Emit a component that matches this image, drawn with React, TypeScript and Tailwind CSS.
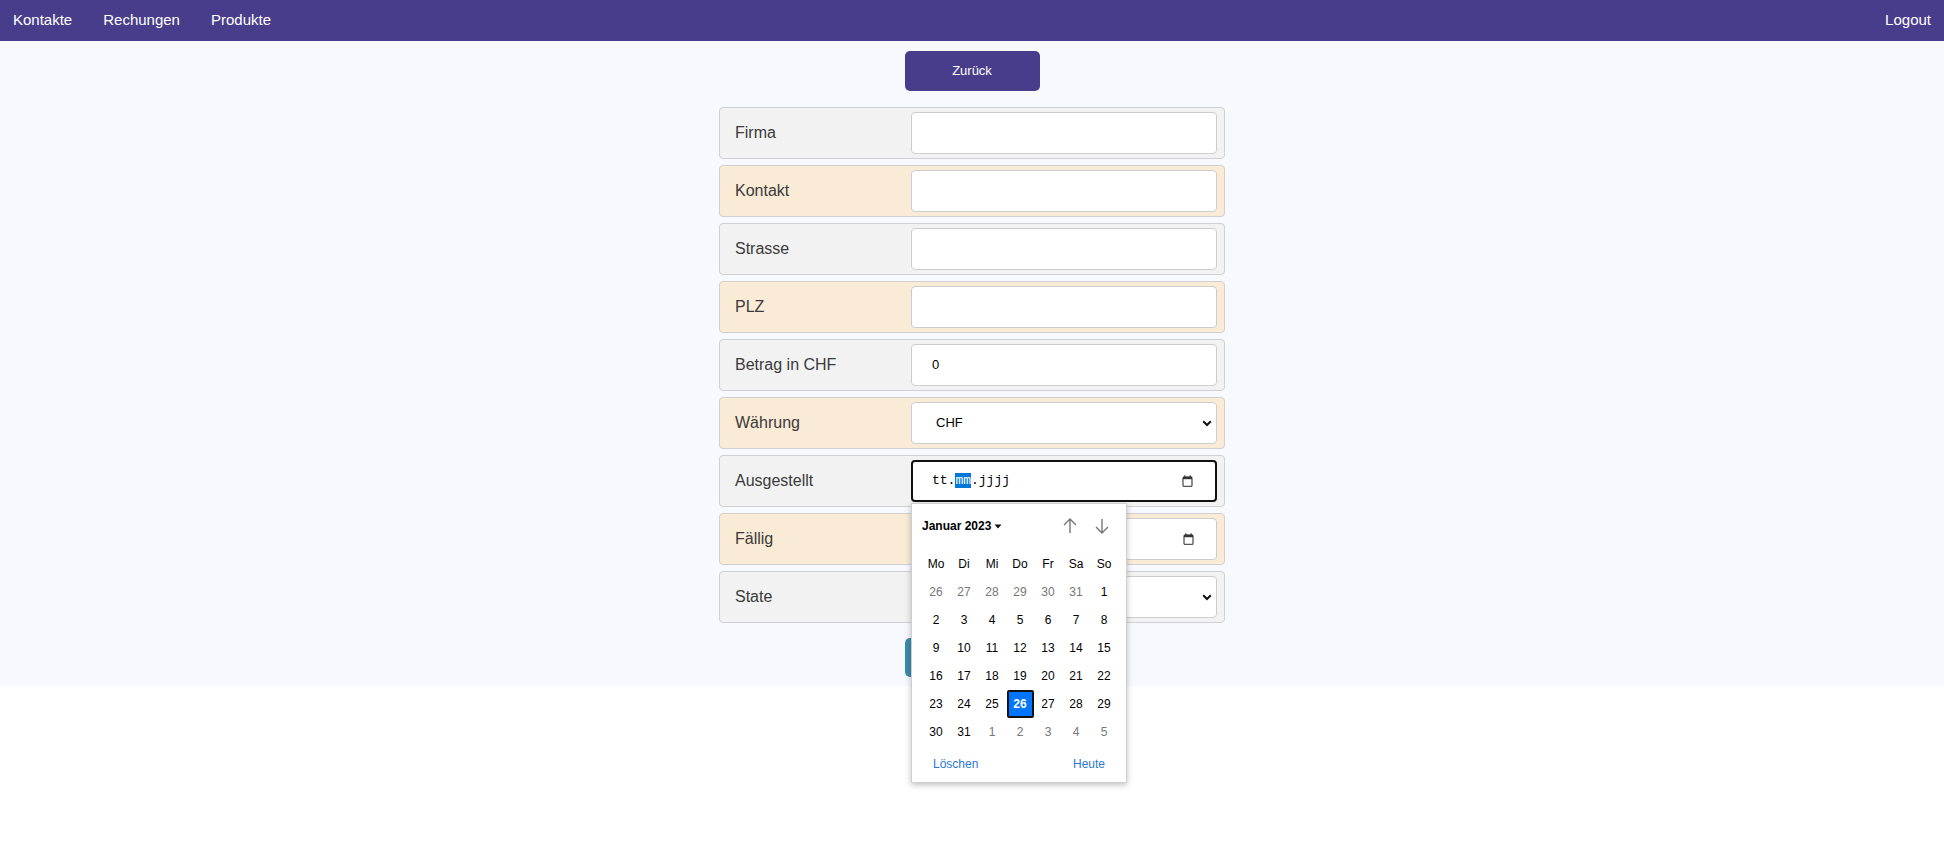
import React from "react";

const ROWS = [
  { label: "Firma", kind: "text", value: "" },
  { label: "Kontakt", kind: "text", value: "" },
  { label: "Strasse", kind: "text", value: "" },
  { label: "PLZ", kind: "text", value: "" },
  { label: "Betrag in CHF", kind: "text", value: "0" },
  { label: "Währung", kind: "select", value: "CHF" },
  { label: "Ausgestellt", kind: "date-focus", value: "" },
  { label: "Fällig", kind: "date", value: "" },
  { label: "State", kind: "select", value: "" },
];

function Chevron() {
  return (
    <svg width="10" height="7" viewBox="0 0 10 7" className="shrink-0">
      <path d="M1.2 1.2 L5 5 L8.8 1.2" fill="none" stroke="#111" strokeWidth="2" />
    </svg>
  );
}

function CalIcon() {
  return (
    <svg width="11" height="12" viewBox="0 0 11 12" className="shrink-0">
      <rect x="2" y="0.5" width="1.5" height="2" fill="#222" />
      <rect x="7.5" y="0.5" width="1.5" height="2" fill="#222" />
      <rect x="1" y="2" width="9" height="9.5" rx="1.2" fill="none" stroke="#555" strokeWidth="1.3" />
      <rect x="1" y="2" width="9" height="2.2" fill="#333" />
    </svg>
  );
}

function ArrowUp() {
  return (
    <svg width="16" height="18" viewBox="0 0 16 18">
      <path d="M8 2 V16 M2 8 L8 2 L14 8" fill="none" stroke="#777" strokeWidth="1.4" />
    </svg>
  );
}

function ArrowDown() {
  return (
    <svg width="16" height="18" viewBox="0 0 16 18">
      <path d="M8 2 V16 M2 10 L8 16 L14 10" fill="none" stroke="#777" strokeWidth="1.4" />
    </svg>
  );
}

const WEEKS: { d: number; out: boolean }[][] = [
  [26, 27, 28, 29, 30, 31].map((d) => ({ d, out: true })).concat([{ d: 1, out: false }]),
  [2, 3, 4, 5, 6, 7, 8].map((d) => ({ d, out: false })),
  [9, 10, 11, 12, 13, 14, 15].map((d) => ({ d, out: false })),
  [16, 17, 18, 19, 20, 21, 22].map((d) => ({ d, out: false })),
  [23, 24, 25, 26, 27, 28, 29].map((d) => ({ d, out: false })),
  [30, 31].map((d) => ({ d, out: false })).concat([1, 2, 3, 4, 5].map((d) => ({ d, out: true }))),
];

function CalendarPopup() {
  return (
    <div className="absolute left-0 top-full z-10 mt-[1px] w-[216px] h-[280px] bg-white border border-[#cfcfcf] shadow-[0_2px_6px_rgba(0,0,0,0.25)] px-[10px] pt-[10px] font-['Liberation_Sans',Arial,sans-serif]">
      <div className="h-[24px] flex items-center justify-between">
        <div className="flex items-center text-[12px] font-bold text-black">
          <span>Januar 2023</span>
          <svg width="8" height="5" viewBox="0 0 8 5" className="ml-[3px]">
            <path d="M0.5 0.5 L7.5 0.5 L4 4.5 Z" fill="#111" />
          </svg>
        </div>
        <div className="flex items-center gap-[16px] pr-[6px]">
          <ArrowUp />
          <ArrowDown />
        </div>
      </div>
      <div className="mt-[12px] grid grid-cols-7 w-[196px]">
        {["Mo", "Di", "Mi", "Do", "Fr", "Sa", "So"].map((d) => (
          <div key={d} className="h-[28px] flex items-center justify-center text-[12px] text-black">
            {d}
          </div>
        ))}
        {WEEKS.flat().map((c, i) => {
          const sel = !c.out && c.d === 26;
          return (
            <div key={i} className="h-[28px] flex items-center justify-center">
              {sel ? (
                <div className="w-[27px] h-[28px] flex items-center justify-center bg-[#0075ff] border-2 border-[#111] rounded-[2px] text-white font-bold text-[12px]">
                  26
                </div>
              ) : (
                <span className={"text-[12px] " + (c.out ? "text-[#767676]" : "text-black")}>{c.d}</span>
              )}
            </div>
          );
        })}
      </div>
      <div className="mt-[6px] h-[24px] flex items-center justify-between px-[11px] text-[12px] text-[#2a78d4]">
        <span>Löschen</span>
        <span>Heute</span>
      </div>
    </div>
  );
}

function Field({ kind, value }: { kind: string; value: string }) {
  if (kind === "select") {
    return (
      <div className="w-[306px] h-[42px] bg-white border border-[#cccccc] rounded-[4px] flex items-center justify-between pl-[24px] pr-[4px] text-[13px] text-black">
        <span>{value}</span>
        <Chevron />
      </div>
    );
  }
  if (kind === "date-focus" || kind === "date") {
    const focus = kind === "date-focus";
    return (
      <div className="relative">
        <div
          className={
            "w-[306px] h-[42px] bg-white rounded-[4px] flex items-center justify-between pr-[22px] font-['Liberation_Mono',monospace] text-[13px] text-black " +
            (focus ? "border-2 border-[#111] pl-[19px]" : "border border-[#cccccc] pl-[20px]")
          }
        >
          <span>
            tt.<span className={focus ? "bg-[#0078d7] text-white" : ""}>mm</span>.jjjj
          </span>
          <CalIcon />
        </div>
        {focus && <CalendarPopup />}
      </div>
    );
  }
  return (
    <div className="w-[306px] h-[42px] bg-white border border-[#cccccc] rounded-[4px] flex items-center pl-[20px] text-[13px] text-black">
      {value}
    </div>
  );
}

export default function App() {
  return (
    <div className="min-h-screen bg-white font-['Liberation_Sans',Arial,sans-serif]">
      <nav className="h-[41px] bg-[#483d8b] flex items-center justify-between pl-[13px] pr-[13px] text-white text-[15px]">
        <div className="flex items-center gap-[31px]">
          <span>Kontakte</span>
          <span>Rechungen</span>
          <span>Produkte</span>
        </div>
        <span>Logout</span>
      </nav>
      <main className="bg-[#f8f8ff] pt-[10px] pb-[9px] flex flex-col items-center">
        <button className="w-[135px] h-[40px] rounded-[5px] bg-[#483d8b] text-white text-[13px]">
          Zurück
        </button>
        <div className="mt-[16px] w-[506px] flex flex-col gap-[6px]">
          {ROWS.map((r, i) => (
            <div
              key={r.label}
              className={
                "h-[52px] border border-[#d0d0d0] rounded-[4px] flex items-center justify-between pl-[15px] pr-[7px] " +
                (i % 2 === 0 ? "bg-[#f2f2f2]" : "bg-[#faebd7]")
              }
            >
              <span className="text-[16px] text-[#3a3a3a]">{r.label}</span>
              <Field kind={r.kind} value={r.value} />
            </div>
          ))}
        </div>
        <button className="mt-[15px] w-[135px] h-[39px] rounded-[5px] bg-[#3d8aab] text-white text-[13px]">
          Speichern
        </button>
      </main>
    </div>
  );
}
